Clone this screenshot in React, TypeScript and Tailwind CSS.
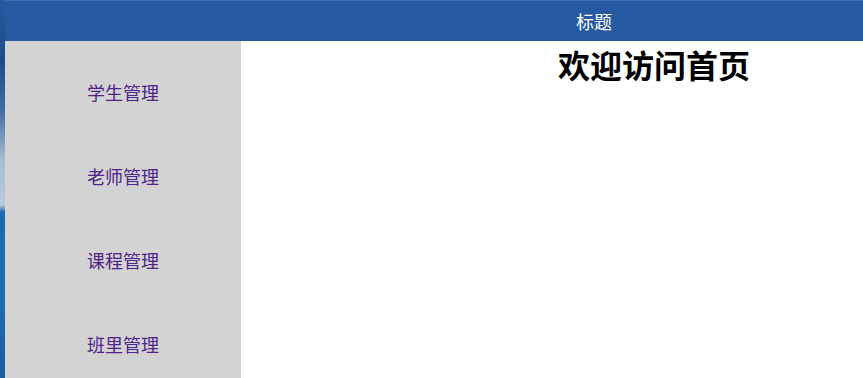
import React from "react";

const items = ["学生管理", "老师管理", "课程管理", "班里管理"];

export default function App() {
  return (
    <div
      className="flex h-[378px] w-[863px] overflow-hidden bg-white"
      style={{ fontFamily: '"Noto Sans CJK SC", "Noto Sans", sans-serif' }}
    >
      <div className="w-[5px] shrink-0 bg-[linear-gradient(to_bottom,#2a5a9e_0px,#1c4b8a_60px,#3f6da3_110px,#a8bdd2_160px,#b9cadb_205px,#1d69b0_212px,#1e6cb2_300px,#1a5c9c_378px)]" />
      <div className="flex min-w-0 flex-1 flex-col">
        <div className="flex h-[41px] shrink-0 items-center border-t border-[#3d6cae] bg-[#2659a1] pl-[571px] text-[18px] leading-none text-white">
          标题
        </div>
        <div className="flex flex-1">
          <div className="flex w-[236px] shrink-0 flex-col bg-[#d3d3d3] pt-[9px]">
            {items.map((t) => (
              <a
                key={t}
                href="#"
                className="flex h-[84px] shrink-0 items-center justify-center text-[18px] text-[#4f238a]"
              >
                {t}
              </a>
            ))}
          </div>
          <div className="flex-1 bg-white pl-[317px] pt-[7px]">
            <h1 className="text-[32px] font-bold leading-[32px] text-black">欢迎访问首页</h1>
          </div>
        </div>
      </div>
    </div>
  );
}
